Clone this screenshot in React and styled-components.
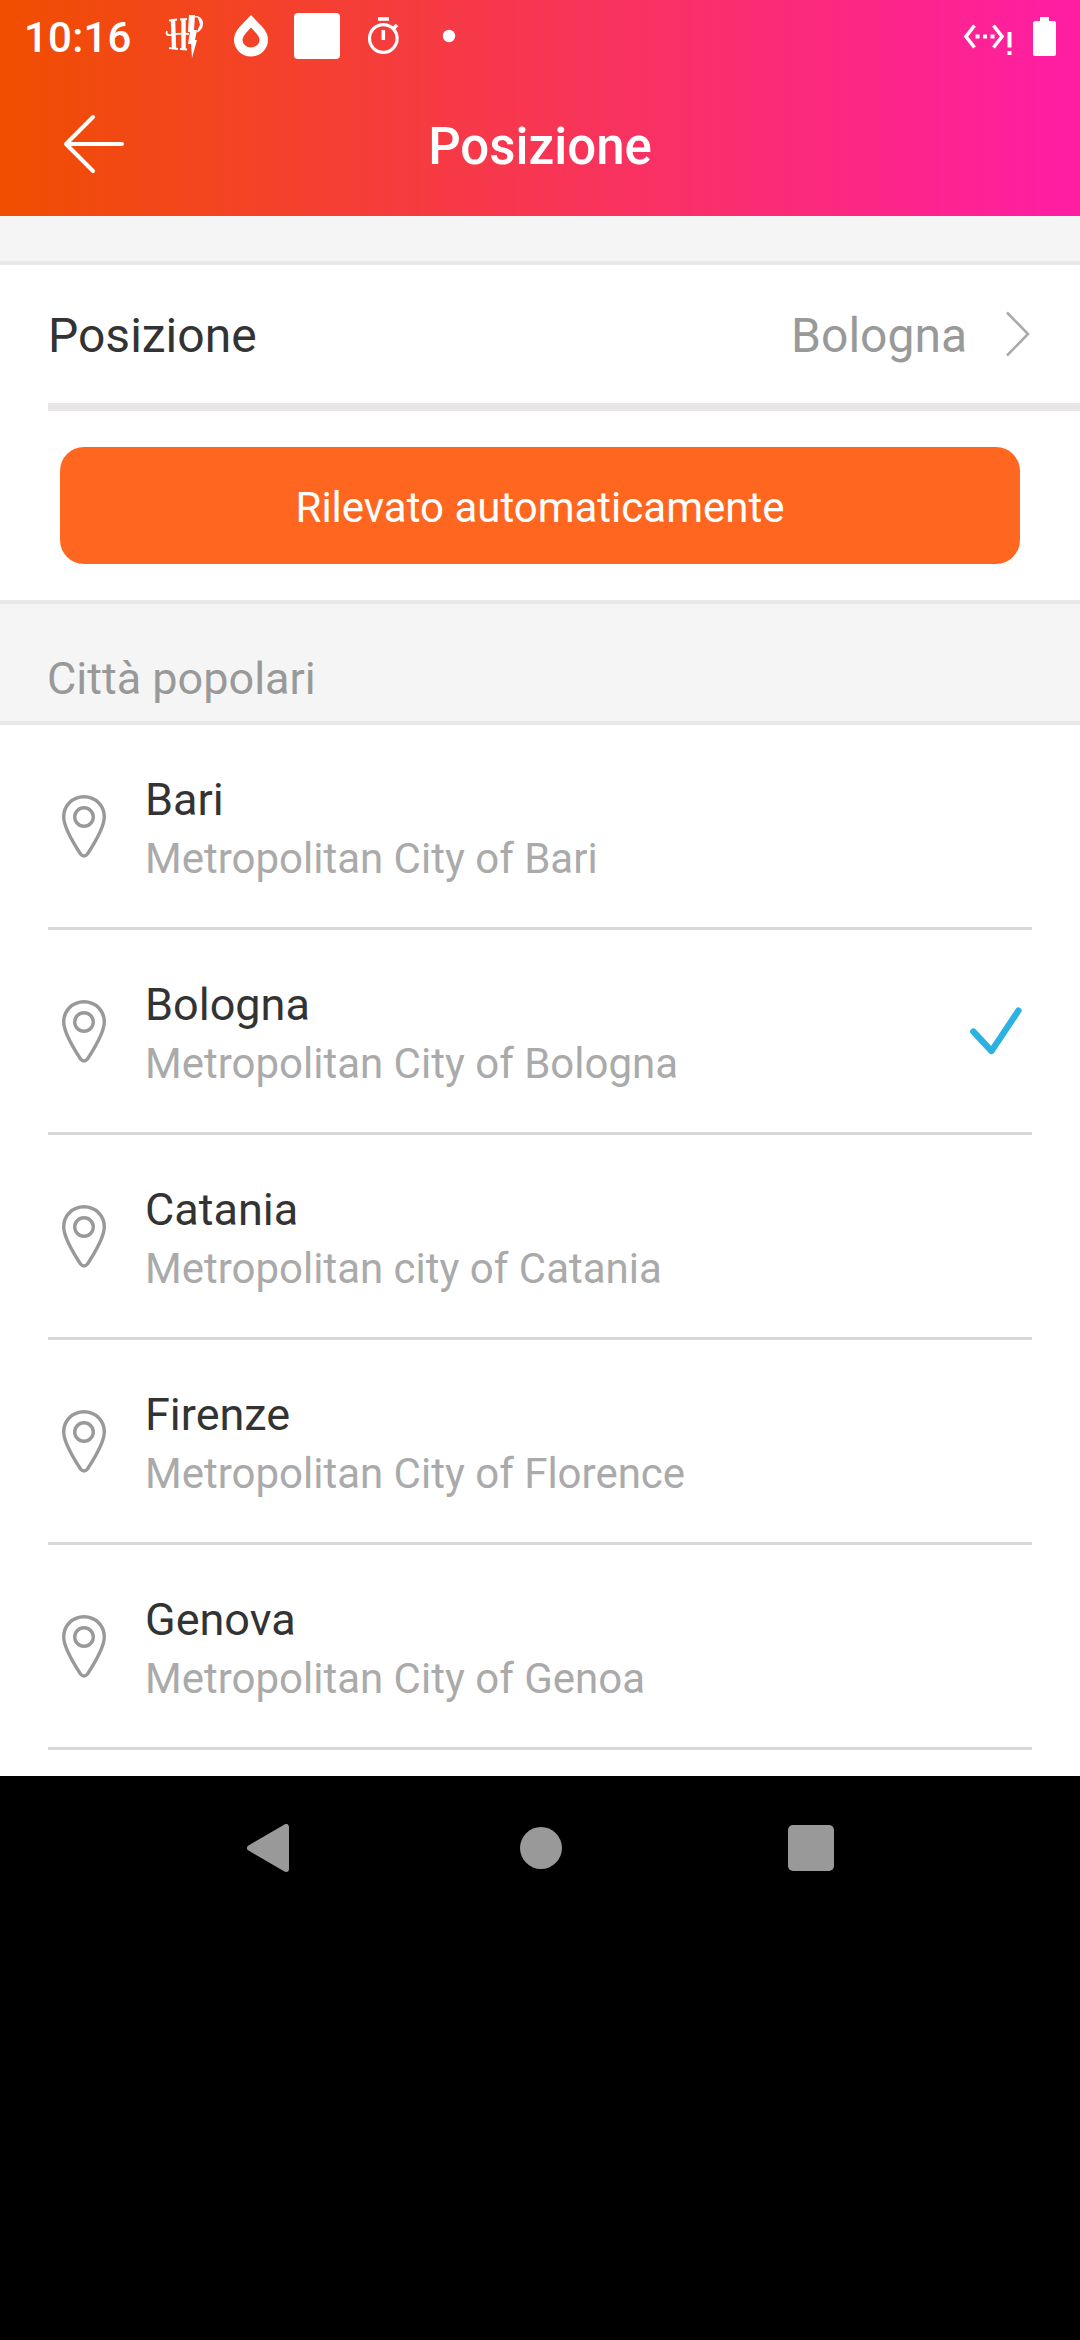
import React from "react";
import styled, { createGlobalStyle } from "styled-components";

const GlobalStyle = createGlobalStyle`
  * { box-sizing: border-box; }
  body { margin: 0; background: #000; font-family: Roboto, "Liberation Sans", sans-serif; }
`;

const Screen = styled.div`
  width: 1080px;
  height: 2340px;
  display: flex;
  flex-direction: column;
  background: #000;
  overflow: hidden;
`;

const Header = styled.header`
  height: 216px;
  flex: none;
  color: #fff;
  background: linear-gradient(90deg, #f04e00 0%, #ff1ea2 98%);
`;

const StatusBar = styled.div`
  height: 72px;
  display: flex;
  align-items: center;
  justify-content: space-between;
  padding: 0 24px 0 24px;
`;

const StatusGroup = styled.div`
  display: flex;
  align-items: center;
`;

const Clock = styled.span`
  width: 141px;
  font-size: 42px;
  line-height: 50px;
  font-weight: 500;
  letter-spacing: 0.2px;
  padding-top: 3px;
`;

const Icon = styled.svg`
  display: block;
  flex: none;
  fill: none;
  margin-left: ${(p) => p.$gap || 0}px;
`;

const TitleBar = styled.div`
  height: 144px;
  display: grid;
  grid-template-columns: 1fr auto 1fr;
  align-items: center;
`;

const BackButton = styled.button`
  width: 140px;
  height: 144px;
  padding: 0 0 0 60px;
  border: 0;
  background: none;
`;

const Title = styled.h1`
  margin: 0;
  padding-top: 5px;
  font-size: 51px;
  line-height: 60px;
  font-weight: 500;
`;

const Gap = styled.div`
  height: 49px;
  flex: none;
  background: #f5f5f5;
  border-bottom: 4px solid #e8e8e8;
`;

const Panel = styled.section`
  flex: none;
  background: #fff;
`;

const LocationRow = styled.div`
  height: 146px;
  margin-left: 48px;
  padding-right: 48px;
  display: flex;
  align-items: center;
  border-bottom: 8px solid #e8e6e7;
  font-size: 48px;
  line-height: 56px;
`;

const LocationLabel = styled.span`
  flex: 1;
  color: #333;
  padding-top: 3px;
`;

const LocationValue = styled.span`
  color: #999;
  padding-top: 3px;
`;

const ButtonArea = styled.div`
  padding: 36px 60px;
`;

const DetectButton = styled.button`
  display: flex;
  width: 100%;
  height: 117px;
  align-items: center;
  justify-content: center;
  padding: 4px 0 0;
  border: 0;
  border-radius: 24px;
  background: #ff6720;
  color: #fff;
  font: 400 42px/50px Roboto, "Liberation Sans", sans-serif;
`;

const SectionTitle = styled.h2`
  flex: none;
  height: 125px;
  margin: 0;
  padding: 48px 47px 0;
  background: #f5f5f5;
  border-top: 4px solid #e8e8e8;
  border-bottom: 4px solid #e8e8e8;
  color: #999;
  font-size: 45px;
  line-height: 53px;
  font-weight: 400;
`;

const CityList = styled.ul`
  flex: none;
  margin: 0;
  padding: 0 48px 26px;
  background: #fff;
  list-style: none;
`;

const CityRow = styled.li`
  height: 205px;
  display: flex;
  align-items: center;
  border-bottom: 3px solid #d8d8d8;
`;

const CityText = styled.div`
  flex: 1;
  display: flex;
  flex-direction: column;
  padding: 6px 0 0 37px;
`;

const CityName = styled.span`
  color: #333;
  font-size: 45px;
  line-height: 60px;
`;

const CityRegion = styled.span`
  color: #aaa;
  font-size: 42px;
  line-height: 58px;
`;

const NavBar = styled.nav`
  height: 144px;
  flex: none;
  display: flex;
  align-items: center;
  justify-content: center;
`;

const WizardMark = () => (
  <Icon width="40" height="46" viewBox="0 0 40 46">
    <path d="M4 7.500l8-1M4 35l9 1M15 6.500l7-.5M15 36l7 .5M2 18q-2 5 5 4 8-2 17-1" stroke="#fff" strokeWidth="1.800" />
    <path d="M8 7l1 28M18.500 6v30" stroke="#fff" strokeWidth="4.400" />
    <path d="M24 2h6l-1 15h3l-2 10h2l-5 18-1-14h-3l2-12h-2z" fill="#fff" />
    <path d="M24 3.200h9q4 1.500 5 6l-.5 5q-2 4-6 5.500l3.500-8-2-7z" fill="#fff" />
    <path d="M30.500 5.500h2l1.500 6-3 5z" fill="#f34329" />
  </Icon>
);

const DropMark = () => (
  <Icon $gap={29} width="34" height="42" viewBox="0 0 34 42">
    <path
      d="M17 0l11 11.500Q34 18 34 25a17 16.500 0 0 1-34 0Q0 18 6 11.500ZM17 12.500l-5 5.500q-3.500 4-3.500 7a8.500 7.500 0 0 0 17 0q0-3-3.500-7Z"
      fill="#fff"
      fillRule="evenodd"
    />
  </Icon>
);

const SquareMark = () => (
  <Icon $gap={26} width="46" height="46" viewBox="0 0 46 46">
    <rect width="46" height="46" rx="4" fill="#fff" />
  </Icon>
);

const TimerMark = () => (
  <Icon $gap={27} width="34" height="38" viewBox="0 0 34 38">
    <circle cx="16.300" cy="21.500" r="13.800" stroke="#fff" strokeWidth="3.200" />
    <path d="M11 2h11" stroke="#fff" strokeWidth="3.600" />
    <path d="M16.300 13v10" stroke="#fff" strokeWidth="3.600" />
    <path d="M26 12l4-4" stroke="#fff" strokeWidth="3.600" />
  </Icon>
);

const DotMark = () => (
  <Icon $gap={41} width="14" height="14" viewBox="0 0 14 14">
    <circle cx="7" cy="7" r="6.200" fill="#fff" />
  </Icon>
);

const NetworkMark = () => (
  <Icon width="50" height="38" viewBox="0 0 50 38">
    <path d="M12.500 8.500L4 19.500l8.500 11M31.500 8.500l8.500 11-8.500 11" stroke="#fff" strokeWidth="3.600" />
    <path d="M13.500 19.500h4M21 19.500h4M28.500 19.500h4" stroke="#fff" strokeWidth="4" />
    <path d="M47.500 15v15.500M47.500 34v4" stroke="#fff" strokeWidth="4" />
  </Icon>
);

const BatteryMark = () => (
  <Icon $gap={21} width="23" height="39" viewBox="0 0 23 39">
    <path d="M7 0h9v4h5q2 0 2 2v31q0 2-2 2H2q-2 0-2-2V6q0-2 2-2h5z" fill="#fff" />
  </Icon>
);

const BackArrow = () => (
  <Icon width="66" height="60" viewBox="0 0 66 60">
    <path
      d="M33 3L6 30l27 27M6 30h56"
      stroke="#fff"
      strokeWidth="4"
      strokeLinecap="round"
      strokeLinejoin="round"
    />
  </Icon>
);

const Chevron = () => (
  <Icon $gap={39} width="26" height="46" viewBox="0 0 26 46">
    <path d="M1 1.500L22 23 1 44.500" stroke="#aaa" strokeWidth="2.600" />
  </Icon>
);

const Pin = () => (
  <Icon $gap={12} width="48" height="66" viewBox="0 0 48 66">
    <path
      d="M24 3.700C12 3.700 3.700 13 3.700 24c0 9 9 25 16.800 37q3.500 4 7 0C35.300 49 44.300 33 44.300 24 44.300 13 36 3.700 24 3.700Z"
      stroke="#999"
      strokeWidth="3.400"
    />
    <circle cx="24" cy="24" r="9.300" stroke="#999" strokeWidth="3.400" />
  </Icon>
);

const Check = () => (
  <Icon width="62" height="50" viewBox="0 0 62 50">
    <path
      d="M3.300 25.500L21.500 45 48.500 4.500"
      stroke="#2bb2e3"
      strokeWidth="6.300"
      strokeLinecap="round"
      strokeLinejoin="round"
    />
  </Icon>
);

const cities = [
  ["Bari", "Metropolitan City of Bari"],
  ["Bologna", "Metropolitan City of Bologna"],
  ["Catania", "Metropolitan city of Catania"],
  ["Firenze", "Metropolitan City of Florence"],
  ["Genova", "Metropolitan City of Genoa"],
];

export default function App() {
  return (
    <Screen>
      <GlobalStyle />
      <Header>
        <StatusBar>
          <StatusGroup>
            <Clock>10:16</Clock>
            <WizardMark />
            <DropMark />
            <SquareMark />
            <TimerMark />
            <DotMark />
          </StatusGroup>
          <StatusGroup>
            <NetworkMark />
            <BatteryMark />
          </StatusGroup>
        </StatusBar>
        <TitleBar>
          <BackButton aria-label="Indietro">
            <BackArrow />
          </BackButton>
          <Title>Posizione</Title>
        </TitleBar>
      </Header>
      <Gap />
      <Panel>
        <LocationRow>
          <LocationLabel>Posizione</LocationLabel>
          <LocationValue>Bologna</LocationValue>
          <Chevron />
        </LocationRow>
        <ButtonArea>
          <DetectButton>Rilevato automaticamente</DetectButton>
        </ButtonArea>
      </Panel>
      <SectionTitle>Città popolari</SectionTitle>
      <CityList>
        {cities.map(([name, region]) => (
          <CityRow key={name}>
            <Pin />
            <CityText>
              <CityName>{name}</CityName>
              <CityRegion>{region}</CityRegion>
            </CityText>
            {name === "Bologna" && <Check />}
          </CityRow>
        ))}
      </CityList>
      <NavBar>
        <Icon width="42" height="48" viewBox="0 0 42 48">
          <path
            d="M3 24L39 3v42Z"
            fill="#999"
            stroke="#999"
            strokeWidth="6"
            strokeLinejoin="round"
          />
        </Icon>
        <Icon $gap={231} width="42" height="42" viewBox="0 0 42 42">
          <circle cx="21" cy="21" r="21" fill="#999" />
        </Icon>
        <Icon $gap={226} width="46" height="46" viewBox="0 0 46 46">
          <rect width="46" height="46" rx="5" fill="#999" />
        </Icon>
      </NavBar>
    </Screen>
  );
}
